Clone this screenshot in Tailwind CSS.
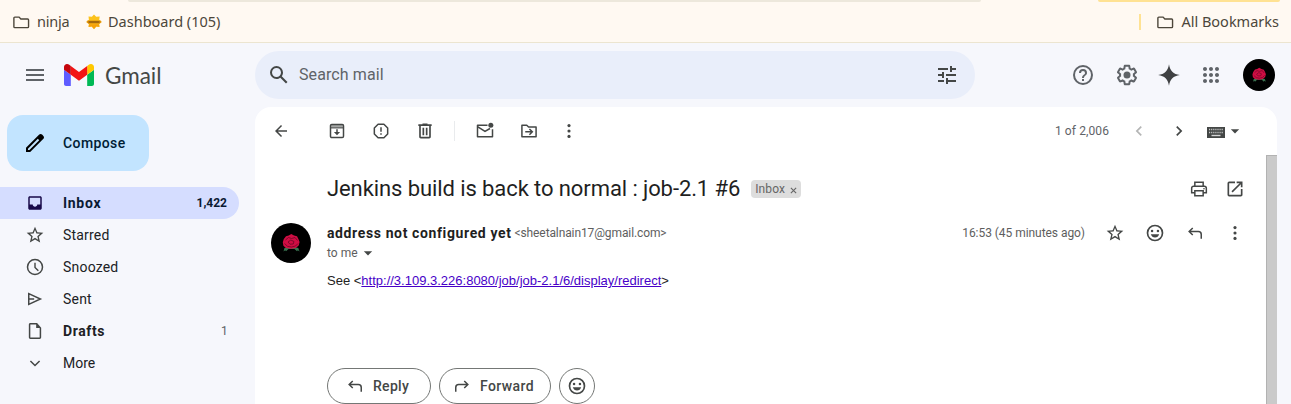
<!DOCTYPE html>
<html lang="en">
<head>
<meta charset="utf-8">
<title>Gmail</title>
<script src="https://cdn.jsdelivr.net/npm/@tailwindcss/browser@4"></script>
</head>
<body class="w-[1291px] h-[404px] overflow-hidden bg-[#f6f7fc] font-[Roboto,sans-serif] text-[#444746]">
<svg class="hidden">
  <symbol id="folder" viewBox="0 0 18 14"><path d="M1.8 1.2h4.6l1.9 2h7.3a1 1 0 0 1 1 1v7.3a1 1 0 0 1-1 1H1.8a1 1 0 0 1-1-1V2.2a1 1 0 0 1 1-1z" fill="none" stroke="currentColor" stroke-width="1.5"/></symbol>
  <symbol id="star" viewBox="0 0 24 24"><path d="M22 9.24l-7.19-.62L12 2 9.190 8.630 2 9.240l5.460 4.730L5.820 21 12 17.270 18.180 21l-1.630-7.030L22 9.240zM12 15.400l-3.760 2.270 1-4.280-3.320-2.880 4.380-.38L12 6.100l1.710 4.040 4.380.38-3.320 2.880 1 4.280L12 15.400z"/></symbol>
  <symbol id="more" viewBox="0 0 24 24"><circle cx="12" cy="5.500" r="1.900"/><circle cx="12" cy="12" r="1.900"/><circle cx="12" cy="18.500" r="1.900"/></symbol>
  <symbol id="smile" viewBox="0 0 24 24"><path fill-rule="evenodd" d="M12 2a10 10 0 1 0 0 20 10 10 0 0 0 0-20zm0 18a8 8 0 1 1 0-16 8 8 0 0 1 0 16z"/><circle cx="8.500" cy="9.500" r="1.500"/><circle cx="15.500" cy="9.500" r="1.500"/><path d="M7 13.500h10c-.7 2.400-2.600 4-5 4s-4.300-1.600-5-4z"/></symbol>
  <symbol id="reply" viewBox="0 0 24 24"><path d="M9.300 6 5 10.200l4.300 4.200M5 10.200H16a3.500 3.500 0 0 1 3.500 3.500V19" fill="none" stroke="currentColor" stroke-width="1.800"/></symbol>
  <symbol id="caret" viewBox="0 0 24 24"><path d="M7 10l5 5 5-5z"/></symbol>
  <symbol id="rose" viewBox="0 0 40 40"><circle cx="20" cy="20" r="20" fill="#000"/><path d="M12.500 28.500l1-3.500 3.500-1h6.500l3.800 1 1.200 3.500-1.700-1.200-.8 1-2.500-2.300h-6l-2.500 2.300-.8-1z" fill="#3a7350"/><path d="M20.300 11l2.700 1.500 3 .8 1.400 2.700 1.200 3-.9 3.500-3 2.500-4.700.8-5-.8-2.600-2.200-.6-3.500 1-3.200 2.200-2.900 2.700-.8z" fill="#d00d43"/><path d="M14.500 17l3-2.500 3 1 3.500-1 2.500 3M13.500 20.500l3 2.800 4 .7 4-1 2.500-2.500M17 19l2.800-2 3.200 1.500-.8 2.500-3.200.2z" fill="none" stroke="#6a0724" stroke-width=".8"/></symbol>
</svg>

<!-- bookmarks bar -->
<div class="h-[43px] bg-[#fff9f2] border-b border-[#ece5d0] flex flex-col text-[#4c463a] font-['Noto_Sans',sans-serif]">
  <div class="h-[2px] flex justify-between pl-[128px] pr-[11px]">
    <div class="w-[853px] bg-[#ede8dc] rounded-b-lg"></div>
    <div class="w-[182px] bg-[#ffe293] rounded-b-lg"></div>
  </div>
  <div class="h-10 flex items-center pl-[13px] pr-3 text-[14.5px]">
    <svg class="w-[17px] h-[13px]"><use href="#folder"/></svg>
    <span class="ml-[7px] w-[33px] whitespace-nowrap tracking-[-0.2px]">ninja</span>
    <svg class="ml-4 w-4 h-4" viewBox="0 0 16 16"><path d="M8 .5l2.200 2.300 3.500-.2-.5 3.200L15.800 8l-2.600 2 .3 3-3.200-.5L8 15.200l-2.300-2.700-3.200.5.4-3L.2 8l2.700-2.200-.4-3.200 3.400.2z" fill="#fcc21b"/><path d="M1.500 6.500h13l1 1.500-2 1.800h-11L.5 8z" fill="#e0930f"/><path d="M3 10.300h10l.4 2.500-3.200-.4L8 15l-2.200-2.600-3.100.4z" fill="#f5a10c"/><path d="M2.500 8h11" stroke="#8a5a10" stroke-width="1.400"/></svg>
    <span class="ml-[6px] whitespace-nowrap">Dashboard (105)</span>
    <div class="ml-auto w-[2px] h-4 bg-[#ffe293]"></div>
    <svg class="ml-4 w-[17px] h-[13px]"><use href="#folder"/></svg>
    <span class="ml-[7px] whitespace-nowrap">All Bookmarks</span>
  </div>
</div>

<!-- app header -->
<header class="h-16 flex items-center">
  <div class="w-[255px] flex items-center pl-[23px]">
    <svg class="size-6 fill-[#5f6368]" viewBox="0 0 24 24"><path d="M3 18h18v-2H3v2zm0-5h18v-2H3v2zm0-7v2h18V6H3z"/></svg>
    <svg class="ml-[17px] w-[30px] h-[22px]" viewBox="52 42 88 66" preserveAspectRatio="none"><path fill="#5f5cff" d="M58 108h14V74L52 59v43c0 3.320 2.690 6 6 6"/><path fill="#00b955" d="M120 108h14c3.320 0 6-2.690 6-6V59l-20 15"/><path fill="#ffc800" d="M120 48v26l20-15v-8c0-7.420-8.470-11.650-14.400-7.200"/><path fill="#f21414" d="M72 74V48l24 18 24-18v26L96 92"/><path fill="#c5050c" d="M52 51v8l20 15V48l-5.600-4.200c-5.940-4.450-14.400-.22-14.400 7.200"/></svg>
    <span class="ml-[11px] pt-[2px] text-[22.5px] leading-6 whitespace-nowrap font-[Lato,sans-serif] tracking-[-0.05px]">Gmail</span>
  </div>
  <div class="w-[720px] h-12 rounded-full bg-[#e9eefa] flex items-center px-3">
    <svg class="size-6 fill-[#444746]" viewBox="0 0 24 24"><path d="M20.490 19l-5.730-5.730C15.530 12.200 16 10.910 16 9.500A6.500 6.500 0 1 0 9.500 16c1.410 0 2.700-.47 3.770-1.240L19 20.490 20.490 19zM5 9.500C5 7.010 7.010 5 9.500 5S14 7.010 14 9.500 11.990 14 9.500 14 5 11.990 5 9.500z"/></svg>
    <span class="ml-2 text-base text-[#5f6368] whitespace-nowrap tracking-[0.1px]">Search mail</span>
    <svg class="ml-auto mr-1 size-6 fill-[#444746]" viewBox="0 0 24 24"><path d="M3 17v2h6v-2H3zM3 5v2h10V5H3zm10 16v-2h8v-2h-8v-2h-2v6h2zM7 9v2H3v2h4v2h2V9H7zm14 4v-2H11v2h10zm-6-4h2V7h4V5h-4V3h-2v6z"/></svg>
  </div>
  <div class="ml-auto pr-4 flex items-center fill-[#5f6368]">
    <svg class="size-6" viewBox="0 0 24 24"><path d="M12 2a10 10 0 1 0 0 20 10 10 0 0 0 0-20zm0 18a8 8 0 1 1 0-16 8 8 0 0 1 0 16zm-1-4h2v2h-2zm1-10a4 4 0 0 0-4 4h2a2 2 0 1 1 4 0c0 2-3 1.750-3 5h2c0-2.250 3-2.500 3-5a4 4 0 0 0-4-4z"/></svg>
    <svg class="ml-5 size-6" viewBox="0 0 24 24"><path d="M13.850 22.250h-3.700c-.74 0-1.360-.54-1.450-1.270l-.27-1.890c-.27-.14-.53-.29-.79-.46l-1.800.72c-.7.26-1.470-.03-1.810-.65L2.200 15.530c-.35-.66-.2-1.440.36-1.880l1.530-1.190c-.01-.15-.02-.3-.02-.46 0-.15.010-.31.020-.46l-1.520-1.190c-.59-.45-.74-1.260-.37-1.880l1.850-3.190c.34-.62 1.110-.9 1.790-.63l1.810.73c.26-.17.520-.32.780-.46l.27-1.910c.09-.7.710-1.250 1.440-1.250h3.700c.74 0 1.360.54 1.450 1.270l.27 1.890c.27.14.53.29.79.46l1.800-.72c.71-.26 1.480.03 1.820.65l1.840 3.180c.36.66.2 1.440-.36 1.880l-1.520 1.190c.01.15.02.3.02.46s-.01.31-.02.46l1.520 1.190c.56.45.72 1.230.37 1.860l-1.860 3.220c-.34.62-1.110.9-1.800.63l-1.800-.72c-.26.17-.52.32-.78.46l-.27 1.910c-.1.680-.72 1.220-1.460 1.220zm-3.230-2h2.760l.37-2.550.53-.22c.44-.18.88-.44 1.340-.78l.45-.34 2.380.96 1.380-2.400-2.030-1.580.07-.56c.03-.26.06-.51.060-.78s-.03-.53-.06-.78l-.07-.56 2.030-1.580-1.390-2.400-2.390.96-.45-.35c-.42-.32-.87-.58-1.330-.77l-.52-.22-.37-2.550h-2.760l-.37 2.550-.53.21c-.44.190-.88.440-1.340.790l-.45.330-2.380-.95-1.390 2.390 2.030 1.580-.07.560a7 7 0 0 0-.06.790c0 .26.020.53.060.780l.07.560-2.030 1.580 1.380 2.400 2.390-.96.45.35c.43.330.86.580 1.330.770l.53.220z"/><circle cx="12" cy="12" r="3.500"/></svg>
    <svg class="ml-[18px] size-6 fill-[#3f4143]" viewBox="0 0 24 24"><path d="M12 1.200C12.900 7.600 16.400 11.100 22.800 12 16.400 12.900 12.900 16.400 12 22.800 11.100 16.400 7.600 12.900 1.200 12 7.600 11.100 11.100 7.600 12 1.200z"/></svg>
    <svg class="ml-[18px] size-6" viewBox="0 0 24 24"><path d="M6 8c1.100 0 2-.9 2-2s-.9-2-2-2-2 .9-2 2 .9 2 2 2zm6 12c1.100 0 2-.9 2-2s-.9-2-2-2-2 .9-2 2 .9 2 2 2zm-6 0c1.100 0 2-.9 2-2s-.9-2-2-2-2 .9-2 2 .9 2 2 2zm0-6c1.100 0 2-.9 2-2s-.9-2-2-2-2 .9-2 2 .9 2 2 2zm6 0c1.100 0 2-.9 2-2s-.9-2-2-2-2 .9-2 2 .9 2 2 2zm4-8c0 1.100.9 2 2 2s2-.9 2-2-.9-2-2-2-2 .9-2 2zm-4 2c1.100 0 2-.9 2-2s-.9-2-2-2-2 .9-2 2 .9 2 2 2zm6 6c1.100 0 2-.9 2-2s-.9-2-2-2-2 .9-2 2 .9 2 2 2zm0 6c1.100 0 2-.9 2-2s-.9-2-2-2-2 .9-2 2 .9 2 2 2z"/></svg>
    <svg class="ml-5 size-8"><use href="#rose"/></svg>
  </div>
</header>

<div class="flex h-[297px]">
  <!-- navigation -->
  <nav class="w-[255px] shrink-0 pt-2 text-sm text-[#202124] tracking-[0.2px]">
    <button class="ml-[7px] w-[142px] h-14 rounded-2xl bg-[#c2e4ff] flex items-center pl-4 text-[#001d35] font-medium tracking-[0.4px]">
      <svg class="size-6 fill-black" viewBox="0 0 24 24"><path d="M20.410 4.940l-1.350-1.350c-.78-.78-2.050-.78-2.830 0L3 16.820V21h4.180L20.410 7.770c.79-.78.79-2.050 0-2.830zm-14 14.120L5 19v-1.360l9.820-9.820 1.410 1.410-9.820 9.830z"/></svg>
      <span class="ml-4 whitespace-nowrap">Compose</span>
    </button>
    <div class="mt-4 w-[239px] h-8 rounded-r-full bg-[#d5ddff] flex items-center pl-[25px] pr-3 text-[#0b1a33] font-bold">
      <svg class="size-[18px] mx-px fill-[#180a4a]" viewBox="0 0 24 24"><path d="M19 3H5c-1.100 0-2 .9-2 2v14c0 1.100.9 2 2 2h14c1.100 0 2-.9 2-2V5c0-1.100-.9-2-2-2zm0 11h-4c0 1.660-1.340 3-3 3s-3-1.340-3-3H5V5h14v9z"/></svg>
      <span class="ml-[18px] whitespace-nowrap tracking-[0.7px]">Inbox</span>
      <span class="ml-auto text-xs whitespace-nowrap tracking-normal">1,422</span>
    </div>
    <div class="h-8 flex items-center pl-[25px]"><svg class="size-5 fill-[#444746]"><use href="#star"/></svg><span class="ml-[18px] whitespace-nowrap">Starred</span></div>
    <div class="h-8 flex items-center pl-[25px]"><svg class="size-5" viewBox="0 0 24 24"><circle cx="12" cy="12" r="9" fill="none" stroke="#444746" stroke-width="1.800"/><path d="M12 7v5.500l4 4" fill="none" stroke="#444746" stroke-width="1.700"/></svg><span class="ml-[18px] whitespace-nowrap">Snoozed</span></div>
    <div class="h-8 flex items-center pl-[25px]"><svg class="size-5" viewBox="0 0 24 24"><path d="M4.500 5.500v13L18.500 12zM4.500 12H11" fill="none" stroke="#444746" stroke-width="1.800"/></svg><span class="ml-[18px] whitespace-nowrap">Sent</span></div>
    <div class="w-[239px] h-8 flex items-center pl-[25px] pr-[11px]"><svg class="size-5 fill-[#444746]" viewBox="0 0 24 24"><path d="M14.500 2.500H6.500c-1.100 0-1.900.8-1.900 1.900v15.200c0 1.100.8 1.900 1.900 1.900h11c1.100 0 1.900-.8 1.900-1.900V8l-4.900-5.500zM6.400 19.700V4.300h7V8.500h4.200v11.200z"/></svg><span class="ml-[18px] font-bold whitespace-nowrap tracking-[0.6px]">Drafts</span><span class="ml-auto text-xs text-[#5f6368]">1</span></div>
    <div class="h-8 flex items-center pl-[25px]"><svg class="size-5" viewBox="0 0 24 24"><path d="M6.500 9.500 12 15l5.500-5.500" fill="none" stroke="#444746" stroke-width="1.800"/></svg><span class="ml-[18px] whitespace-nowrap tracking-normal">More</span></div>
  </nav>

  <!-- message pane -->
  <main class="w-[1022px] bg-white rounded-t-2xl flex flex-col">
    <div class="h-12 shrink-0 flex items-center pl-4 pr-8 fill-[#444746]">
      <svg class="size-[18px] mx-px" viewBox="0 0 24 24"><path d="M20 11H7.830l5.590-5.590L12 4l-8 8 8 8 1.410-1.410L7.830 13H20v-2z"/></svg>
      <svg class="ml-9 size-5" viewBox="0 0 24 24"><path d="M5 4.500h14v3H5z" fill="#a5a7a6"/><rect x="4.200" y="4.200" width="15.600" height="15.600" rx="1.500" fill="none" stroke="#444746" stroke-width="1.800"/><path d="M4 8.200h16" stroke="#444746" stroke-width="1.400"/><path d="M11.100 10h1.800v3.200h2.800L12 17l-3.700-3.800h2.800z"/></svg>
      <svg class="ml-6 size-5" viewBox="0 0 24 24"><path d="M8.500 4h7L20 8.500v7L15.500 20h-7L4 15.500v-7z" fill="none" stroke="#444746" stroke-width="1.800" stroke-linejoin="round"/><path d="M11.100 7.500h1.800v5.500h-1.800zM11.100 14.700h1.800v1.800h-1.800z"/></svg>
      <svg class="ml-6 size-5" viewBox="0 0 24 24"><path d="M15 4V3H9v1H4v2h1v13c0 1.100.9 2 2 2h10c1.100 0 2-.9 2-2V6h1V4h-5zm2 15H7V6h10v13zM9 8h2v9H9zm4 0h2v9h-2z"/></svg>
      <div class="ml-[19px] w-px h-5 bg-[#e9ebed]"></div>
      <svg class="ml-5 size-5" viewBox="0 0 24 24"><path d="M15 5H3v14h18V10M3.500 7l8.500 5.500 6-3.500" fill="none" stroke="#444746" stroke-width="1.800" stroke-linejoin="round"/><circle cx="19" cy="5" r="3"/></svg>
      <svg class="ml-6 size-5" viewBox="0 0 24 24"><path d="M3.500 5h5.800l2.200 2.200h9V19H3.500z" fill="none" stroke="#444746" stroke-width="1.800" stroke-linejoin="round"/><path d="M7.500 13h8M12.500 9.500 16 13l-3.500 3.500" fill="none" stroke="#444746" stroke-width="1.800"/></svg>
      <svg class="ml-5 size-5"><use href="#more"/></svg>
      <span class="ml-auto text-xs text-[#5f6368] whitespace-nowrap tracking-[0.1px]">1 of 2,006</span>
      <svg class="ml-5 size-5 fill-[#b4b5b5]" viewBox="0 0 24 24"><path d="M15.410 7.410L14 6l-6 6 6 6 1.410-1.410L10.830 12z"/></svg>
      <svg class="ml-5 size-5" viewBox="0 0 24 24"><path d="M10 6L8.590 7.410 13.170 12l-4.580 4.590L10 18l6-6z"/></svg>
      <svg class="ml-[18px] mt-[2px] w-[18px] h-[11px]" viewBox="0 0 18 11"><path d="M0 0h18v11H0z"/><path d="M2 2.500h14M2 5.500h14" stroke="#c4c5c5" stroke-width="1.500" stroke-dasharray="1.200 .9"/><path d="M4.500 8.500h9" stroke="#d5d6d6" stroke-width="1.400"/></svg>
      <svg class="size-5"><use href="#caret"/></svg>
    </div>

    <div class="flex-1 flex">
      <div class="flex-1 flex flex-col fill-[#444746]">
        <div class="mt-3 h-11 flex items-center pl-[72px] pr-[21px]">
          <h1 class="text-[22px] leading-7 text-[#1f1f1f] whitespace-nowrap tracking-[-0.09px]">Jenkins build is back to normal : job-2.1 #6</h1>
          <div class="ml-[11px] w-[50px] h-[18px] rounded bg-[#ddd] flex items-center px-1 text-xs text-[#666]"><span class="whitespace-nowrap tracking-[0.1px]">Inbox</span><svg class="ml-auto mt-[2px] size-[7px]" viewBox="0 0 8 8"><path d="M1 1l6 6M7 1L1 7" stroke="#666" stroke-width="1.300"/></svg></div>
          <svg class="ml-auto size-5" viewBox="0 0 24 24"><path d="M7 8.500V4h10v4.500M6.500 16.500H3.200V11a2.200 2.200 0 0 1 2.200-2.200h13.200a2.200 2.200 0 0 1 2.200 2.200v5.500h-3.300M7 14h10v6H7z" fill="none" stroke="#444746" stroke-width="1.800"/><circle cx="18" cy="11.700" r="1"/></svg>
          <svg class="ml-4 size-5" viewBox="0 0 24 24"><path d="M19 19H5V5h7V3H5a2 2 0 0 0-2 2v14a2 2 0 0 0 2 2h14c1.100 0 2-.9 2-2v-7h-2v7zM14 3v2h3.590l-9.830 9.830 1.410 1.410L19 6.410V10h2V3h-7z"/></svg>
        </div>
        <div class="mt-3 flex pl-4 pr-[21px]">
          <svg class="size-10"><use href="#rose"/></svg>
          <div class="ml-4 flex-1 flex flex-col">
            <div class="h-5 flex items-center">
              <span class="text-sm font-bold text-[#1f1f1f] whitespace-nowrap tracking-[0.62px]">address not configured yet</span>
              <span class="ml-[3px] text-xs text-[#5e5e5e] whitespace-nowrap tracking-[-0.11px]">&lt;sheetalnain17@gmail.com&gt;</span>
              <span class="ml-auto text-xs text-[#5e5e5e] whitespace-nowrap tracking-[-0.05px]">16:53 (45 minutes ago)</span>
              <svg class="ml-5 size-5"><use href="#star"/></svg>
              <svg class="ml-5 size-5"><use href="#smile"/></svg>
              <svg class="ml-5 size-5"><use href="#reply"/></svg>
              <svg class="ml-5 size-5"><use href="#more"/></svg>
            </div>
            <div class="h-5 flex items-center"><span class="text-xs text-[#5e5e5e] whitespace-nowrap">to me</span><svg class="size-5"><use href="#caret"/></svg></div>
            <p class="mt-2 text-[13px] leading-5 text-[#222] font-['Liberation_Sans',sans-serif]">See &lt;<a class="text-[#4700c8] underline">http://3.109.3.226:8080/job/job-2.1/6/display/redirect</a>&gt;</p>
          </div>
        </div>
        <div class="mt-[77px] pl-[72px] flex gap-2 text-sm font-medium">
          <button class="w-[104px] h-9 shrink-0 rounded-full border border-[#747775] flex items-center pl-[17px]"><svg class="size-5"><use href="#reply"/></svg><span class="ml-2 whitespace-nowrap tracking-[0.3px]">Reply</span></button>
          <button class="w-[112px] h-9 shrink-0 rounded-full border border-[#747775] flex items-center pl-3"><svg class="size-5 -scale-x-100"><use href="#reply"/></svg><span class="ml-2 whitespace-nowrap tracking-[0.4px]">Forward</span></button>
          <button class="size-9 shrink-0 rounded-full border border-[#747775] flex items-center justify-center"><svg class="size-5"><use href="#smile"/></svg></button>
        </div>
      </div>
      <div class="w-[11px] bg-[#cacaca] border-l border-t border-[#b2b2b2]"></div>
    </div>
  </main>
</div>
</body>
</html>
